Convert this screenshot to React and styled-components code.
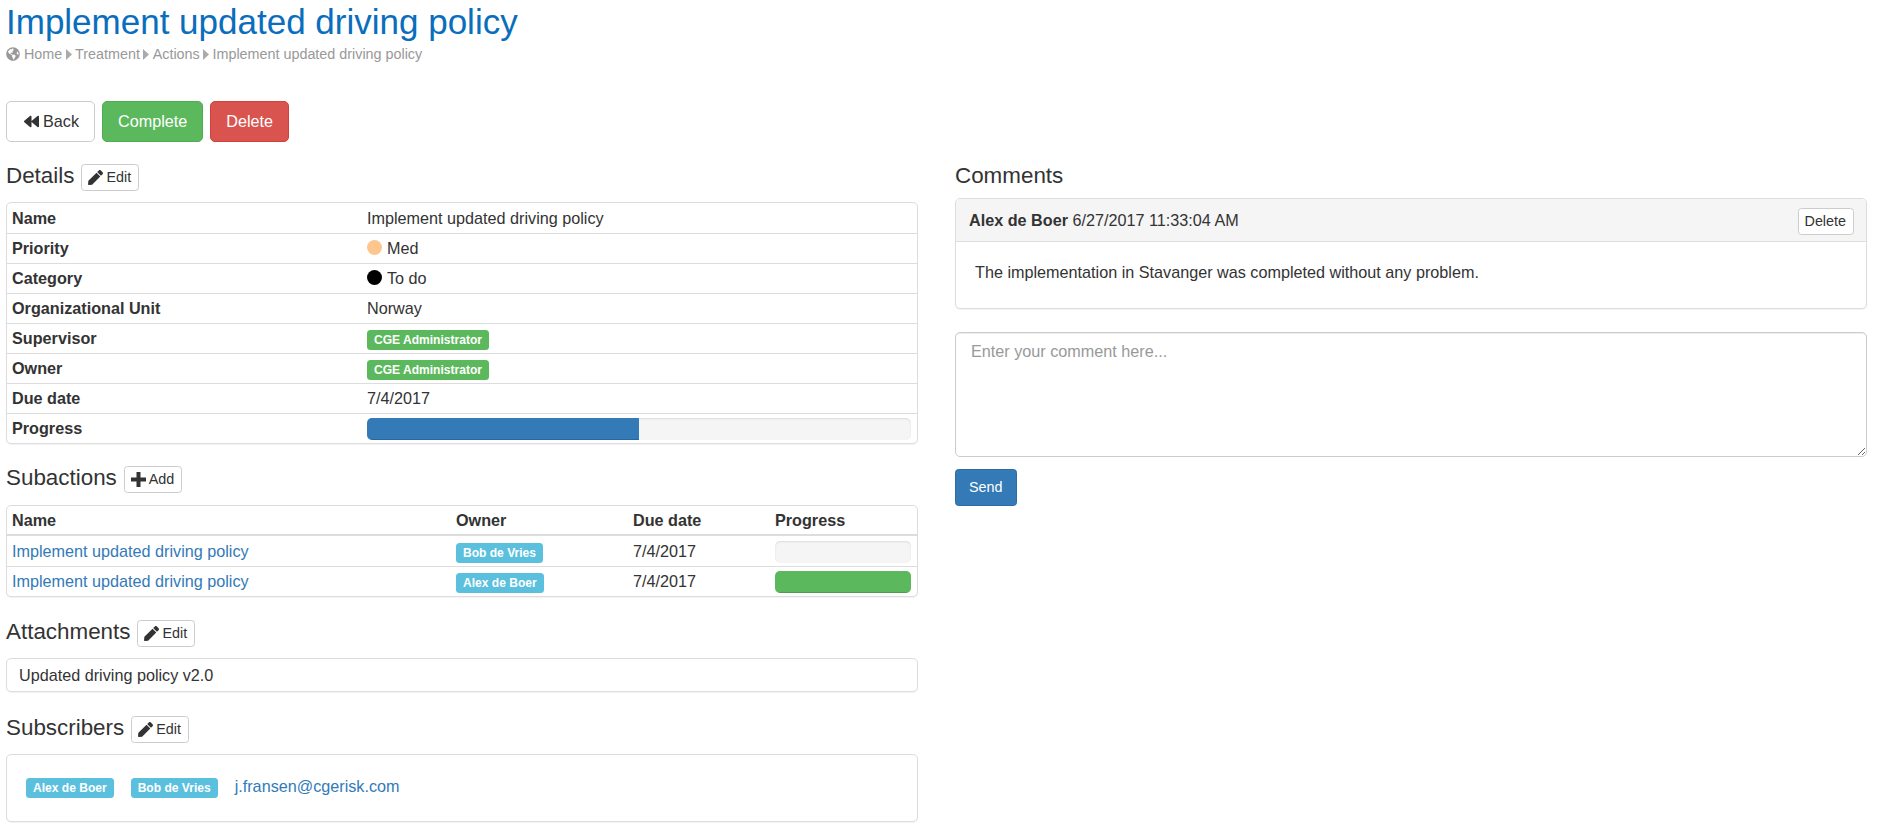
import React from 'react'
import styled, { createGlobalStyle } from 'styled-components'
import { FaBackward, FaPen, FaGlobeAmericas } from 'react-icons/fa'

const GlobalStyle = createGlobalStyle`
  html, body { margin: 0; padding: 0; background: #fff; }
  body {
    font-family: "Liberation Sans", Arial, sans-serif;
    font-size: 16.2px;
    line-height: 1.43;
    color: #333;
  }
  * { box-sizing: border-box; }
`

const Page = styled.div`
  width: 1877px;
  height: 828px;
  overflow: hidden;
  padding: 0 10px 0 6px;
`

const PageTitle = styled.h1`
  margin: 0;
  height: 44px;
  font-size: 35px;
  line-height: 44px;
  font-weight: 400;
  color: #0a6ebd;
`

const Breadcrumb = styled.div`
  display: flex;
  align-items: center;
  height: 20px;
  font-size: 14.35px;
  color: #999;
  svg { flex: none; }
`

const CrumbArrow = styled.svg`
  width: 6px;
  height: 11px;
  margin: 1px 3.4px 0;
  fill: #aaa;
`

const Toolbar = styled.div`
  display: flex;
  gap: 7px;
  margin-top: 37px;
`

const ActionButton = styled.button`
  height: 41px;
  padding: 0 15px;
  font: inherit;
  display: flex;
  align-items: center;
  gap: 4px;
  border-radius: 5px;
  border: 1px solid ${p => p.$border};
  background: ${p => p.$bg};
  color: ${p => p.$color};
`

const Columns = styled.div`
  display: grid;
  grid-template-columns: 912px 912px;
  column-gap: 37px;
`

const Column = styled.div`
  min-width: 0;
`

const HeadingRow = styled.div`
  display: flex;
  align-items: center;
  gap: 7px;
  height: 27px;
  margin-top: ${p => p.$top}px;
`

const Heading = styled.h3`
  margin: 0 0 5px;
  font-size: 22.4px;
  line-height: 27px;
  font-weight: 400;
  color: #333;
`

const SmallButton = styled.button`
  height: 27px;
  padding: 0 7px 0 6px;
  font: inherit;
  font-size: 14.35px;
  line-height: 1;
  display: inline-flex;
  align-items: center;
  gap: 3px;
  background: #fff;
  color: #333;
  border: 1px solid #ccc;
  border-radius: 3.5px;
`

const Panel = styled.div`
  margin-top: ${p => p.$top}px;
  border: 1px solid #ddd;
  border-radius: 5px;
  box-shadow: 0 1px 1px rgba(0, 0, 0, 0.05);
  background: #fff;
  overflow: hidden;
`

const Row = styled.div`
  display: grid;
  grid-template-columns: ${p => p.$cols};
  align-items: center;
  height: 30px;
  padding: ${p => (p.$first ? '1px' : '0')} 6px 0 5px;
  border-top: ${p => (p.$first ? 'none' : '1px solid #ddd')};
`

const Label = styled.div`
  font-weight: 700;
`

const Dot = styled.span`
  display: inline-block;
  width: 15px;
  height: 15px;
  margin-right: 5px;
  border-radius: 50%;
  vertical-align: -1px;
  background: ${p => p.$color};
`

const Tag = styled.span`
  display: inline-block;
  height: 20px;
  padding: 0 7px;
  font-size: 12.05px;
  font-weight: 700;
  line-height: 20px;
  white-space: nowrap;
  color: #fff;
  border-radius: 3.5px;
  background: ${p => p.$color};
`

const ProgressTrack = styled.div`
  height: 22px;
  border-radius: 5px;
  overflow: hidden;
  background: #f5f5f5;
  box-shadow: inset 0 1px 2px rgba(0, 0, 0, 0.1);
`

const ProgressFill = styled.div`
  height: 100%;
  background: ${p => p.$color};
  box-shadow: inset 0 -1px 0 rgba(0, 0, 0, 0.15);
`

const HeaderRow = styled(Row)`
  border-bottom: 2px solid #ddd;
`

const Link = styled.a`
  color: #337ab7;
  text-decoration: none;
`

const MailLink = styled(Link)`
  margin-bottom: 3px;
`

const AttachmentPanel = styled(Panel)`
  padding: 5px 12px 4px;
`

const SubscriberPanel = styled(Panel)`
  display: flex;
  align-items: center;
  gap: 17px;
  height: 68px;
  padding: 0 19px;
`

const CommentHeader = styled.div`
  display: flex;
  justify-content: space-between;
  align-items: center;
  height: 43px;
  padding: 2px 12px 0 13px;
  background: #f5f5f5;
  border-bottom: 1px solid #ddd;
`

const CommentBody = styled.div`
  height: 66px;
  padding: 19px 19px;
`

const TextArea = styled.textarea`
  display: block;
  width: 100%;
  height: 125px;
  margin-top: 23px;
  padding: 7px 15px;
  font: inherit;
  color: #555;
  border: 1px solid #ccc;
  border-radius: 5px;
  box-shadow: inset 0 1px 1px rgba(0, 0, 0, 0.075);
  &::placeholder { color: #999; }
`

const SendButton = styled(ActionButton)`
  height: 37px;
  margin-top: 12px;
  padding: 0 13px;
  font-size: 14.35px;
  border-radius: 3.5px;
`

const detailCols = '355px 1fr'
const subCols = '444px 177px 142px 136px'

const Pencil = () => <FaPen size={15} />

const PlusIcon = () => (
  <svg width="15" height="15" viewBox="0 0 15 15" fill="currentColor">
    <path d="M5.5 0h4v5.5H15v4H9.5V15h-4V9.5H0v-4h5.5z" />
  </svg>
)

const Arrow = () => (
  <CrumbArrow viewBox="0 0 6 11"><path d="M0 0 L6 5.5 L0 11 Z" /></CrumbArrow>
)

export default function App() {
  return (
    <Page>
      <GlobalStyle />
      <PageTitle>Implement updated driving policy</PageTitle>
      <Breadcrumb>
        <FaGlobeAmericas size={14} style={{ marginRight: 4 }} />
        Home<Arrow />Treatment<Arrow />Actions<Arrow />Implement updated driving policy
      </Breadcrumb>

      <Toolbar>
        <ActionButton $bg="#fff" $border="#ccc" $color="#333"><FaBackward size={15} style={{ marginLeft: 2 }} />Back</ActionButton>
        <ActionButton $bg="#5cb85c" $border="#4cae4c" $color="#fff">Complete</ActionButton>
        <ActionButton $bg="#d9534f" $border="#d43f3a" $color="#fff">Delete</ActionButton>
      </Toolbar>

      <Columns>
        <Column>
          <HeadingRow $top={22}>
            <Heading>Details</Heading>
            <SmallButton><Pencil />Edit</SmallButton>
          </HeadingRow>
          <Panel $top={11}>
            <Row $cols={detailCols} $first><Label>Name</Label><div>Implement updated driving policy</div></Row>
            <Row $cols={detailCols}><Label>Priority</Label><div><Dot $color="#fdc68f" />Med</div></Row>
            <Row $cols={detailCols}><Label>Category</Label><div><Dot $color="#000" />To do</div></Row>
            <Row $cols={detailCols}><Label>Organizational Unit</Label><div>Norway</div></Row>
            <Row $cols={detailCols}><Label>Supervisor</Label><div><Tag $color="#5cb85c">CGE Administrator</Tag></div></Row>
            <Row $cols={detailCols}><Label>Owner</Label><div><Tag $color="#5cb85c">CGE Administrator</Tag></div></Row>
            <Row $cols={detailCols}><Label>Due date</Label><div>7/4/2017</div></Row>
            <Row $cols={detailCols}>
              <Label>Progress</Label>
              <ProgressTrack><ProgressFill $color="#337ab7" style={{ width: '50%' }} /></ProgressTrack>
            </Row>
          </Panel>

          <HeadingRow $top={22}>
            <Heading>Subactions</Heading>
            <SmallButton><PlusIcon />Add</SmallButton>
          </HeadingRow>
          <Panel $top={12}>
            <HeaderRow $cols={subCols} $first>
              <Label>Name</Label><Label>Owner</Label><Label>Due date</Label><Label>Progress</Label>
            </HeaderRow>
            <Row $cols={subCols} $first>
              <Link href="#">Implement updated driving policy</Link>
              <div><Tag $color="#5bc0de">Bob de Vries</Tag></div>
              <div>7/4/2017</div>
              <ProgressTrack />
            </Row>
            <Row $cols={subCols}>
              <Link href="#">Implement updated driving policy</Link>
              <div><Tag $color="#5bc0de">Alex de Boer</Tag></div>
              <div>7/4/2017</div>
              <ProgressTrack><ProgressFill $color="#5cb85c" style={{ width: '100%' }} /></ProgressTrack>
            </Row>
          </Panel>

          <HeadingRow $top={23}>
            <Heading>Attachments</Heading>
            <SmallButton><Pencil />Edit</SmallButton>
          </HeadingRow>
          <AttachmentPanel $top={11}>Updated driving policy v2.0</AttachmentPanel>

          <HeadingRow $top={24}>
            <Heading>Subscribers</Heading>
            <SmallButton><Pencil />Edit</SmallButton>
          </HeadingRow>
          <SubscriberPanel $top={11}>
            <Tag $color="#5bc0de">Alex de Boer</Tag>
            <Tag $color="#5bc0de">Bob de Vries</Tag>
            <MailLink href="#">j.fransen@cgerisk.com</MailLink>
          </SubscriberPanel>
        </Column>

        <Column>
          <HeadingRow $top={22}>
            <Heading>Comments</Heading>
          </HeadingRow>
          <Panel $top={7}>
            <CommentHeader>
              <div><strong>Alex de Boer</strong> 6/27/2017 11:33:04 AM</div>
              <SmallButton>Delete</SmallButton>
            </CommentHeader>
            <CommentBody>The implementation in Stavanger was completed without any problem.</CommentBody>
          </Panel>
          <TextArea placeholder="Enter your comment here..." />
          <SendButton $bg="#337ab7" $border="#2e6da4" $color="#fff">Send</SendButton>
        </Column>
      </Columns>
    </Page>
  )
}
